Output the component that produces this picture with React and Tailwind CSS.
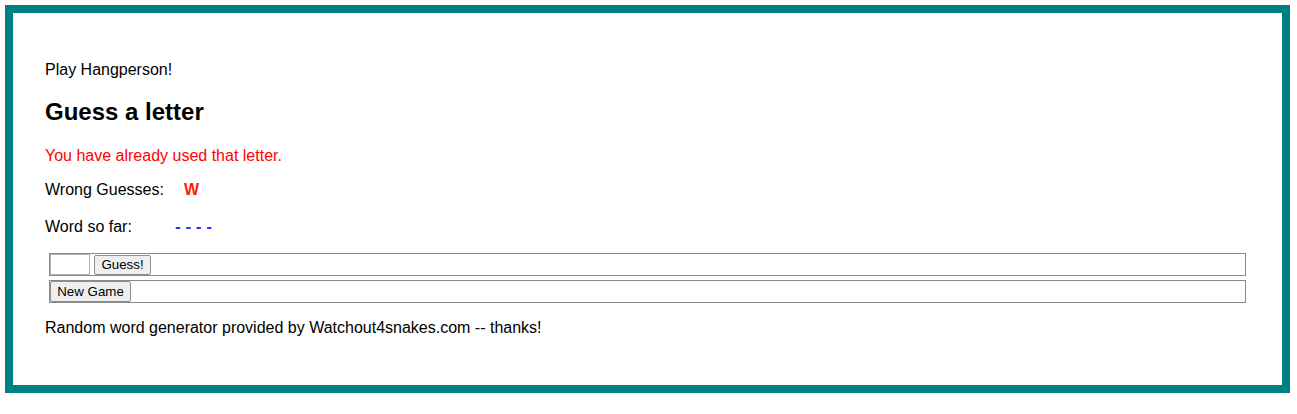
import React from 'react';

// Hangperson game page: teal-framed box, status lines and two small forms
export default function App() {
  return (
    <div className="min-h-[414px] bg-white pt-[5px] pl-[5px]" style={{ fontFamily: '"Liberation Sans", Arial, sans-serif' }}>
      <div className="w-[1285px] h-[388px] border-[8px] border-[#008080] bg-white px-[32px] text-black">
        <p className="mt-[48px] text-[16px] leading-[18px]">Play Hangperson!</p>

        <h2 className="mt-[19px] text-[24px] font-bold leading-[28px]">Guess a letter</h2>

        <p className="mt-[21px] text-[16px] leading-[18px] text-[#ff0000]">You have already used that letter.</p>

        <div className="mt-[16px] flex text-[16px] leading-[18px]">
          <span className="w-[139px]">Wrong Guesses:</span>
          <span className="font-bold text-[#ff1a00]">W</span>
        </div>

        <div className="mt-[19px] flex items-baseline text-[16px] leading-[18px]">
          <span className="w-[130px]">Word so far:</span>
          <span className="font-bold text-[17px] text-[#1a35ff]">- - - -</span>
        </div>

        <form className="mx-[4px] mt-[17px] flex items-center gap-[4px] border border-[#8a8a8a] h-[23px]" onSubmit={e => e.preventDefault()}>
          <input
            type="text"
            className="w-[40px] h-[21px] border border-[#b0b0b0] bg-white outline-none"
          />
          <button
            type="submit"
            className="h-[20px] w-[57px] text-[13.33px] leading-[16px] bg-[#efefef] border border-[#8f8f8f] rounded-[2px] text-black"
          >
            Guess!
          </button>
        </form>

        <form className="mx-[4px] mt-[4px] flex items-center border border-[#8a8a8a] h-[23px]" onSubmit={e => e.preventDefault()}>
          <button
            type="submit"
            className="h-[21px] w-[81px] text-[13.33px] leading-[16px] bg-[#efefef] border border-[#8f8f8f] rounded-[2px] text-black"
          >
            New Game
          </button>
        </form>

        <p className="mt-[16px] text-[16px] leading-[18px]">Random word generator provided by Watchout4snakes.com -- thanks!</p>
      </div>
    </div>
  );
}
